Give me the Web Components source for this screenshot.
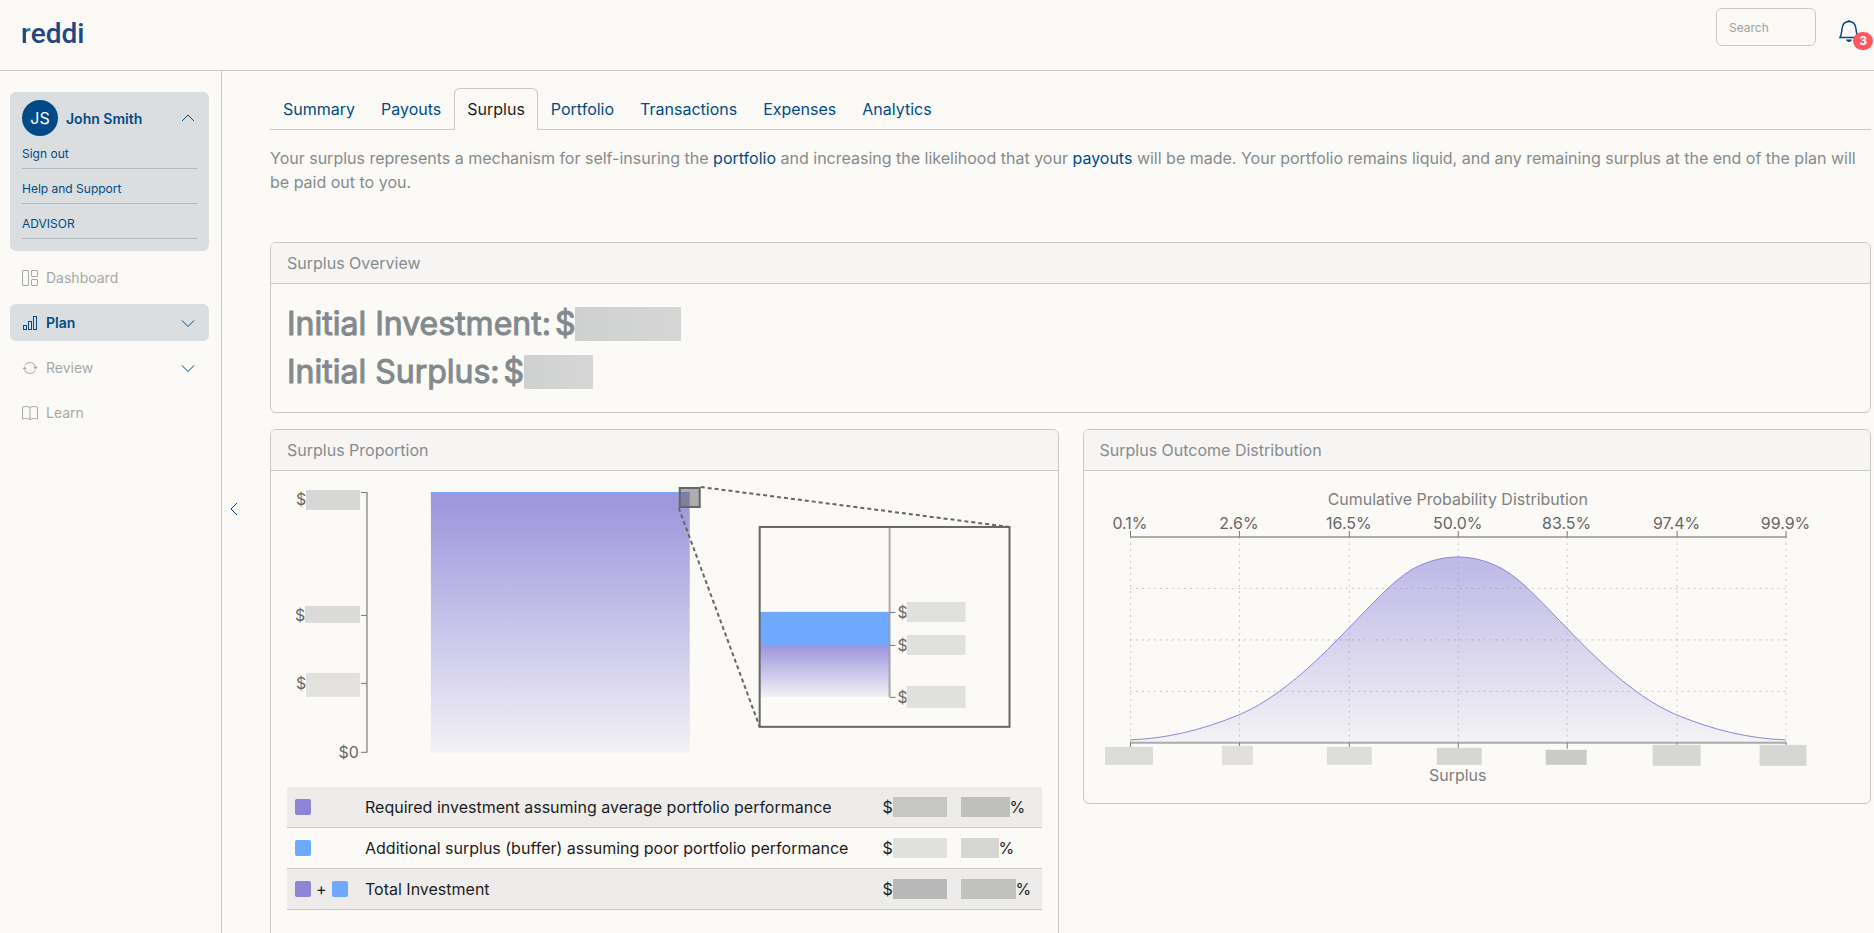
<!DOCTYPE html>
<html lang="en">
<head>
<meta charset="utf-8">
<meta name="viewport" content="width=device-width, initial-scale=1">
<title>reddi - Surplus</title>
<style>
    :root {
        --bg: #fbfaf6;
        --line: #c9c9c8;
        --navy: #004b87;
        --muted: #868b8e;
        --chip: #dadee0;
        --purple: #8e84d8;
        --blue: #6ea8ff;
    }
    body {
        margin: 0;
        height: 100vh;
        display: flex;
        flex-direction: column;
        overflow: hidden;
        background: var(--bg);
        color: #1b1d1f;
        font: 16px/24px Inter, "Liberation Sans", sans-serif;
    }
    .shell {
        display: flex;
        flex: 1;
        min-height: 0;
    }
    main {
        flex: 1;
        min-width: 0;
        padding: 17px 3px 0 0;
        overflow-y: auto;
        scrollbar-width: none;
    }
    .intro {
        margin: 16px 0 48px;
        color: var(--muted);
    }
    .intro a {
        color: var(--navy);
        text-decoration: none;
    }
    .columns {
        display: grid;
        grid-template-columns: 1fr 1fr;
        gap: 24px;
        align-items: start;
        margin-top: 16px;
    }
</style>
</head>
<body>
    <app-header></app-header>
    <div class="shell">
        <side-bar>
            <user-card name="John Smith" initials="JS"></user-card>
            <nav-item icon="dashboard">Dashboard</nav-item>
            <nav-item icon="plan" active expandable>Plan</nav-item>
            <nav-item icon="review" expandable>Review</nav-item>
            <nav-item icon="learn">Learn</nav-item>
        </side-bar>
        <side-toggle></side-toggle>
        <main>
            <tab-bar>
                <tab-link>Summary</tab-link>
                <tab-link>Payouts</tab-link>
                <tab-link active>Surplus</tab-link>
                <tab-link>Portfolio</tab-link>
                <tab-link>Transactions</tab-link>
                <tab-link>Expenses</tab-link>
                <tab-link>Analytics</tab-link>
            </tab-bar>
            <p class="intro">Your surplus represents a mechanism for self-insuring the <a href="#portfolio">portfolio</a> and increasing the likelihood that your <a href="#payouts">payouts</a> will be made. Your portfolio remains liquid, and any remaining surplus at the end of the plan will be paid out to you.</p>
            <panel-card>
                <span slot="heading">Surplus Overview</span>
                <overview-total width="106">Initial Investment:</overview-total>
                <overview-total width="69">Initial Surplus:</overview-total>
            </panel-card>
            <div class="columns">
                <panel-card>
                    <span slot="heading">Surplus Proportion</span>
                    <proportion-chart></proportion-chart>
                    <proportion-table></proportion-table>
                </panel-card>
                <panel-card>
                    <span slot="heading">Surplus Outcome Distribution</span>
                    <distribution-chart></distribution-chart>
                </panel-card>
            </div>
        </main>
    </div>

<script>
const icons = {
    dashboard: `<rect x=".5" y=".5" width="6" height="15" rx=".5"/><rect x="9.5" y=".5" width="6" height="6" rx=".5"/><rect x="9.5" y="9.5" width="6" height="6" rx=".5"/>`,
    plan: `<rect x="1.5" y="10.5" width="3" height="4"/><rect x="6.5" y="6.5" width="3" height="8"/><rect x="11.5" y="1.5" width="3" height="13"/>`,
    review: `<path d="M2.800 5.500A5.800 5.800 0 0 1 13.500 6.500M13.200 10.500A5.800 5.800 0 0 1 2.500 9.500"/><path d="M11 6.800h4.800l-2.400 2.800zM.2 9.200H5L2.600 6.400z" fill="currentColor" stroke="none"/>`,
    learn: `<path d="M8 2.500C6.500 1.300 3 1.300.5 2v12C3 13.300 6.500 13.300 8 14.500c1.500-1.200 5-1.200 7.500-.5V2C13 1.300 9.500 1.300 8 2.500zv12"/>`,
    down: `<path d="M2 5.500 8 11.500l6-6"/>`,
    up: `<path d="M2 11 8 5l6 6"/>`,
    left: `<path d="M11 2 5 8l6 6"/>`
};

function icon(name, size = 16) {
    return `<svg width="${size}" height="${size}" viewBox="0 0 16 16" fill="none" stroke="currentColor" aria-hidden="true">${icons[name]}</svg>`;
}

class AppHeader extends HTMLElement {

    constructor() {
        super();
        this.attachShadow({mode: "open"}).innerHTML = `
            <style>
                :host {
                    display: flex;
                    align-items: flex-start;
                    justify-content: space-between;
                    height: 70px;
                    padding-left: 21px;
                    border-bottom: 1px solid var(--line);
                }
                .logo {
                    margin-top: 16px;
                    color: #23477f;
                    font: 500 28px/36px Roboto, sans-serif;
                    text-decoration: none;
                }
                .logo span {
                    background: linear-gradient(90deg, #23477f 35%, #2f9fc4);
                    background-clip: text;
                    -webkit-background-clip: text;
                    color: transparent;
                }
                .tools {
                    display: flex;
                    gap: 23px;
                    padding-top: 8px;
                }
                input {
                    box-sizing: border-box;
                    width: 100px;
                    height: 38px;
                    padding: 0 12px;
                    border: 1px solid var(--line);
                    border-radius: 6px;
                    background: transparent;
                    font: 12px Inter, sans-serif;
                }
                input::placeholder {
                    color: #a2a3a3;
                }
                button {
                    position: relative;
                    display: flex;
                    align-items: flex-start;
                    width: 35px;
                    height: 42px;
                    padding: 10px 0 0;
                    border: 0;
                    background: none;
                    color: var(--navy);
                }
                .badge {
                    position: absolute;
                    right: 1px;
                    bottom: 0;
                    width: 20px;
                    height: 18px;
                    border-radius: 9px;
                    background: #ff575e;
                    color: #fff;
                    font: 700 12px/18px Inter, sans-serif;
                    text-align: center;
                }
            </style>
            <a class="logo" href="#home"><span>r</span>eddi</a>
            <div class="tools">
                <input type="search" placeholder="Search" aria-label="Search">
                <button type="button" aria-label="Notifications">
                    <svg width="20" height="26" viewBox="0 0 20 26" fill="none" stroke="currentColor" stroke-width="1.500">
                        <path d="M1 19.500h18c-1.500-2-1.500-5-2-8.500-.4-4.500-3-7.500-7-7.500S3.400 6.500 3 11c-.5 3.500-.5 6.500-2 8.500z"/>
                        <path d="M8.500 3.500a1.500 1.500 0 0 1 3 0zM7 21.500h6c-.5 3.300-5.500 3.300-6 0z" fill="currentColor" stroke="none"/>
                    </svg>
                    <span class="badge">3</span>
                </button>
            </div>`;
    }
}

class SideBar extends HTMLElement {

    constructor() {
        super();
        this.attachShadow({mode: "open"}).innerHTML = `
            <style>
                :host {
                    box-sizing: border-box;
                    display: flex;
                    flex-direction: column;
                    flex: none;
                    gap: 8px;
                    width: 222px;
                    padding: 21px 12px 0 10px;
                    border-right: 1px solid var(--line);
                }
            </style>
            <slot></slot>`;
    }
}

class UserCard extends HTMLElement {

    constructor() {
        super();
        this.attachShadow({mode: "open"}).innerHTML = `
            <style>
                :host {
                    display: block;
                    padding: 8px 12px 12px;
                    border-radius: 6px;
                    background: var(--chip);
                    color: var(--navy);
                }
                button {
                    display: flex;
                    align-items: center;
                    gap: 8px;
                    width: 100%;
                    padding: 0;
                    border: 0;
                    background: none;
                    color: inherit;
                    font: 600 14px Inter, sans-serif;
                }
                .avatar {
                    width: 36px;
                    border-radius: 50%;
                    background: var(--navy);
                    color: #fff;
                    font: 16px/36px Inter, sans-serif;
                }
                svg {
                    margin: 0 1px 0 auto;
                }
                ul {
                    display: grid;
                    gap: 12px;
                    margin: 10px 0 0;
                    padding: 0;
                    list-style: none;
                }
                a {
                    display: block;
                    padding-bottom: 6px;
                    border-bottom: 1px solid #b3babe;
                    color: inherit;
                    font-size: 12px;
                    line-height: 16px;
                    text-decoration: none;
                }
            </style>
            <button type="button" aria-expanded="true">
                <span class="avatar">${this.getAttribute("initials")}</span>
                ${this.getAttribute("name")}
                ${icon("up")}
            </button>
            <ul>
                <li><a href="#signout">Sign out</a></li>
                <li><a href="#help">Help and Support</a></li>
                <li><a href="#advisor">ADVISOR</a></li>
            </ul>`;
    }
}

class NavItem extends HTMLElement {

    constructor() {
        super();
        this.attachShadow({mode: "open"}).innerHTML = `
            <style>
                :host {
                    display: block;
                    border-radius: 6px;
                    color: #a7a9a9;
                }
                :host([active]) {
                    background: var(--chip);
                    color: var(--navy);
                    font-weight: 600;
                }
                a {
                    display: flex;
                    align-items: center;
                    gap: 8px;
                    height: 37px;
                    padding: 0 13px 0 12px;
                    color: inherit;
                    font-size: 14px;
                    text-decoration: none;
                }
                .arrow {
                    display: flex;
                    margin-left: auto;
                    color: var(--navy);
                }
            </style>
            <a href="#${this.getAttribute("icon")}">
                ${icon(this.getAttribute("icon"))}
                <slot></slot>
                ${this.hasAttribute("expandable") ? `<span class="arrow">${icon("down")}</span>` : ""}
            </a>`;
    }
}

class SideToggle extends HTMLElement {

    constructor() {
        super();
        this.attachShadow({mode: "open"}).innerHTML = `
            <style>
                :host {
                    display: block;
                    flex: none;
                    width: 48px;
                    padding-top: calc(50vh - 41px);
                    box-sizing: border-box;
                }
                button {
                    display: flex;
                    align-items: center;
                    justify-content: center;
                    width: 24px;
                    height: 24px;
                    padding: 0;
                    border: 0;
                    background: none;
                    color: var(--navy);
                }
            </style>
            <button type="button" aria-label="Collapse menu">${icon("left")}</button>`;
    }
}

class TabBar extends HTMLElement {

    constructor() {
        super();
        this.attachShadow({mode: "open"}).innerHTML = `
            <style>
                :host {
                    display: flex;
                    border-bottom: 1px solid var(--line);
                }
            </style>
            <slot></slot>`;
    }
}

class TabLink extends HTMLElement {

    constructor() {
        super();
        this.attachShadow({mode: "open"}).innerHTML = `
            <style>
                :host {
                    display: block;
                    margin-bottom: -1px;
                }
                a {
                    display: block;
                    padding: 8px 12px;
                    border: 1px solid transparent;
                    border-radius: 6px 6px 0 0;
                    color: var(--navy);
                    text-decoration: none;
                }
                :host([active]) a {
                    border-color: var(--line) var(--line) var(--bg);
                    background: var(--bg);
                    color: #1b1d1f;
                }
            </style>
            <a href="#${this.textContent.toLowerCase()}"><slot></slot></a>`;
    }
}

class PanelCard extends HTMLElement {

    constructor() {
        super();
        this.attachShadow({mode: "open"}).innerHTML = `
            <style>
                :host {
                    display: block;
                    border: 1px solid var(--line);
                    border-radius: 6px;
                    overflow: hidden;
                }
                header {
                    padding: 8px 16px;
                    border-bottom: 1px solid var(--line);
                    background: #f6f5f4;
                    color: var(--muted);
                }
                .body {
                    padding: 16px;
                }
            </style>
            <header><slot name="heading"></slot></header>
            <div class="body"><slot></slot></div>`;
    }
}

class OverviewTotal extends HTMLElement {

    constructor() {
        super();
        this.attachShadow({mode: "open"}).innerHTML = `
            <style>
                :host, .amount {
                    display: flex;
                    align-items: center;
                }
                :host {
                    gap: 4px;
                    color: #838a8e;
                    font-size: 32px;
                    line-height: 48px;
                    -webkit-text-stroke: 1px;
                }
                .mask {
                    width: ${this.getAttribute("width")}px;
                    height: 34px;
                    background: linear-gradient(90deg, #cfd1d1, #d5d6d5);
                }
            </style>
            <slot></slot>
            <span class="amount">$<span class="mask"></span></span>`;
    }
}

class ProportionChart extends HTMLElement {

    constructor() {
        super();
        this.attachShadow({mode: "open"}).innerHTML = `
            <style>
                :host {
                    display: block;
                }
                svg {
                    display: block;
                    width: 100%;
                    overflow: visible;
                }
                text {
                    fill: #666;
                    font-size: 16px;
                }
            </style>
            <svg viewBox="0 0 755 300" role="img" aria-label="Surplus proportion">
                <defs>
                    <linearGradient id="fade" x1="0" y1="0" x2="0" y2="1">
                        <stop offset=".05" stop-color="#9f98dd"/>
                        <stop offset="1" stop-color="#f2f1f5"/>
                    </linearGradient>
                </defs>
                <path d="M80 5v261" stroke="#999" stroke-width="2" stroke-opacity=".8"/>
                <path d="M74 5.500h6M74 128.500h6M74 196.500h6M74 265.500h6" stroke="#777"/>
                <text x="9" y="18">$</text>
                <text x="8" y="134">$</text>
                <text x="9" y="202">$</text>
                <text x="72" y="271" text-anchor="end">$0</text>
                <rect x="19" y="3" width="54" height="20" fill="#d7d7d5"/>
                <rect x="18" y="119" width="55" height="17" fill="#dadad9"/>
                <rect x="19" y="186" width="54" height="24" fill="#e2e1de"/>

                <rect x="144" y="5" width="259" height="261" fill="url(#fade)"/>
                <rect x="144" y="5" width="259" height="2" fill="#6ea8ff"/>
                <rect x="393" y="1" width="20" height="19" fill="#666" fill-opacity=".52" stroke="#666" stroke-width="2"/>
                <path d="M414 0 723 40M392 21l81 219" fill="none" stroke="#666" stroke-width="2" stroke-dasharray="4 3"/>

                <rect x="473" y="125" width="130" height="34" fill="#6ea8ff"/>
                <rect x="473" y="158" width="130" height="52" fill="url(#fade)"/>
                <path d="M603 41v169" stroke="#999" stroke-width="2" stroke-opacity=".8"/>
                <path d="M603 125.500h6M603 158.500h6M603 210.500h6" stroke="#777"/>
                <rect x="473" y="40" width="250" height="200" fill="none" stroke="#666" stroke-width="2"/>
                <text x="611" y="131">$</text>
                <text x="611" y="164">$</text>
                <text x="611" y="216">$</text>
                <rect x="620" y="115" width="59" height="20" fill="#e0e0de"/>
                <rect x="620" y="148" width="59" height="20" fill="#e0e0de"/>
                <rect x="620" y="199" width="59" height="22" fill="#e0e0de"/>
            </svg>`;
    }
}

class ProportionTable extends HTMLElement {

    constructor() {
        super();
        this.attachShadow({mode: "open"}).innerHTML = `
            <style>
                :host {
                    display: block;
                    margin-bottom: 16px;
                }
                table {
                    width: 100%;
                    border-collapse: collapse;
                    table-layout: fixed;
                    white-space: nowrap;
                }
                td {
                    height: 24px;
                    padding: 8px;
                    border-bottom: 1px solid var(--line);
                }
                tr:nth-child(odd) {
                    background: #edecea;
                }
                .key {
                    width: 54px;
                }
                .amount {
                    width: 62px;
                }
                .share {
                    width: 73px;
                }
                .cell {
                    display: flex;
                    align-items: center;
                }
                .key .cell {
                    gap: 5px;
                }
                i {
                    width: 16px;
                    height: 16px;
                    border-radius: 2px;
                    background: var(--purple);
                }
                i.buffer {
                    background: var(--blue);
                }
                .mask {
                    flex: none;
                    width: 54px;
                    height: 20px;
                    background: #c6c6c5;
                }
                .mask.w49 {
                    width: 49px;
                    background: #bfbfbe;
                }
                .mask.w38 {
                    width: 38px;
                    background: #d6d6d4;
                }
                .mask.w55 {
                    width: 55px;
                    background: #c1c1c0;
                }
                .mask.light {
                    background: #e0e0de;
                }
                .mask.dark {
                    background: #b8b8b8;
                }
            </style>
            <table aria-label="Surplus proportion">
                <tr>
                    <td class="key"><div class="cell"><i></i></div></td>
                    <td>Required investment assuming average portfolio performance</td>
                    <td class="amount"><div class="cell">$<span class="mask"></span></div></td>
                    <td class="share"><div class="cell"><span class="mask w49"></span>%</div></td>
                </tr>
                <tr>
                    <td class="key"><div class="cell"><i class="buffer"></i></div></td>
                    <td>Additional surplus (buffer) assuming poor portfolio performance</td>
                    <td class="amount"><div class="cell">$<span class="mask light"></span></div></td>
                    <td class="share"><div class="cell"><span class="mask w38"></span>%</div></td>
                </tr>
                <tr>
                    <td class="key"><div class="cell"><i></i>+<i class="buffer"></i></div></td>
                    <td>Total Investment</td>
                    <td class="amount"><div class="cell">$<span class="mask dark"></span></div></td>
                    <td class="share"><div class="cell"><span class="mask w55"></span>%</div></td>
                </tr>
            </table>`;
    }
}

class DistributionChart extends HTMLElement {

    constructor() {
        super();
        this.attachShadow({mode: "open"});
        this.render();
    }

    render() {
        const labels = ["0.1%", "2.6%", "16.5%", "50.0%", "83.5%", "97.4%", "99.9%"];
        const xs = labels.map((label, i) => Math.round(30 + i * 656 / 6));
        // x, y, width, height, fill of the covered axis values
        const masks = [
            [5, 260, 48, 18, "#dcdcda"],
            [122, 259, 31, 19, "#e1e0dd"],
            [227, 260, 45, 18, "#dddedc"],
            [337, 261, 45, 17, "#d6d6d5"],
            [446, 263, 41, 15, "#cacac9"],
            [553, 258, 48, 21, "#d6d6d5"],
            [660, 258, 47, 21, "#d6d6d5"]
        ];
        const curve = "M30 253C66 252 103 243 139 228S212 180 248 142C270 120 291 95 313 82 328 74 343 70 358 70S388 74 403 82C425 95 446 120 468 142 504 180 541 213 577 228S650 252 686 253";

        this.shadowRoot.innerHTML = `
            <style>
                :host {
                    display: block;
                }
                svg {
                    display: block;
                    width: 100%;
                    overflow: visible;
                }
                text {
                    fill: #666;
                    font-size: 16px;
                    text-anchor: middle;
                }
                .title {
                    fill: #808080;
                }
            </style>
            <svg viewBox="0 0 755 300" role="img" aria-label="Surplus outcome distribution">
                <defs>
                    <linearGradient id="area" x1="0" y1="0" x2="0" y2="1">
                        <stop offset=".05" stop-color="#8880da" stop-opacity=".52"/>
                        <stop offset="1" stop-color="#8880da" stop-opacity=".06"/>
                    </linearGradient>
                </defs>
                <text class="title" x="358" y="18">Cumulative Probability Distribution</text>
                ${labels.map((label, i) => `<text x="${xs[i]}" y="42">${label}</text>`).join("")}
                <path d="${curve}V256H30z" fill="url(#area)"/>
                <path d="${xs.map(x => `M${x}.5 50v206`).join("")}M30 101.500h656M30 153h656M30 204.500h656" fill="none" stroke="#999" stroke-opacity=".5" stroke-dasharray="2 4"/>
                <path d="${curve}" fill="none" stroke="#8e84d8"/>
                <path d="M30 50h657M30 256h657" stroke="#999" stroke-width="2" stroke-opacity=".8"/>
                <path d="${xs.map(x => `M${x}.5 44v6M${x}.5 256v6`).join("")}" stroke="#777"/>
                ${masks.map(([x, y, w, h, fill]) => `<rect x="${x}" y="${y}" width="${w}" height="${h}" fill="${fill}"/>`).join("")}
                <text class="title" x="358" y="294">Surplus</text>
            </svg>`;
    }
}

customElements.define("app-header", AppHeader);
customElements.define("side-bar", SideBar);
customElements.define("user-card", UserCard);
customElements.define("nav-item", NavItem);
customElements.define("side-toggle", SideToggle);
customElements.define("tab-bar", TabBar);
customElements.define("tab-link", TabLink);
customElements.define("panel-card", PanelCard);
customElements.define("overview-total", OverviewTotal);
customElements.define("proportion-chart", ProportionChart);
customElements.define("proportion-table", ProportionTable);
customElements.define("distribution-chart", DistributionChart);
</script>
</body>
</html>
